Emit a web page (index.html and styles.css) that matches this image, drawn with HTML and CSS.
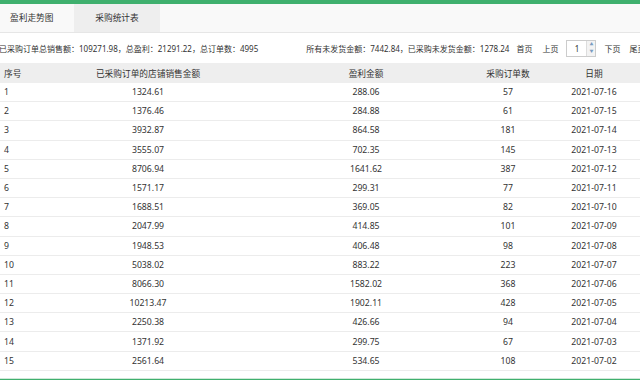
FILE: index.html
```html
<!DOCTYPE html>
<html>
<head>
    <meta charset="UTF-8">
    <title>采购统计表</title>
    <link rel="stylesheet" href="styles.css">
</head>
<body>
    <div class="top-bar"></div>
    <div class="tabs">
        <div class="tab first">盈利走势图</div>
        <div class="tab active">采购统计表</div>
    </div>

    <div class="summary">
        <span class="totals">已采购订单总销售额：109271.98，总盈利：21291.22，总订单数：4995</span>
        <div class="pager">
            <span class="unsent">所有未发货金额：7442.84，已采购未发货金额：1278.24</span>
            <a>首页</a>
            <a class="prev">上页</a>
            <span class="page-input">
                <span class="page-num">1</span>
                <span class="spin">
                    <span class="spin-btn">▲</span>
                    <span class="spin-btn">▼</span>
                </span>
            </span>
            <a>下页</a>
            <a class="last">尾页</a>
        </div>
    </div>

    <table class="data-table">
        <colgroup>
            <col style="width: 32px">
            <col style="width: 232px">
            <col style="width: 204px">
            <col style="width: 80px">
            <col style="width: 92px">
        </colgroup>
        <thead>
            <tr>
                <th class="left">序号</th>
                <th>已采购订单的店铺销售金额</th>
                <th>盈利金额</th>
                <th>采购订单数</th>
                <th>日期</th>
            </tr>
        </thead>
        <tbody id="rows"></tbody>
    </table>
    <div class="bottom-bar"></div>

    <script>
        const data = [
            ['1324.61', '288.06', 57, '2021-07-16'],
            ['1376.46', '284.88', 61, '2021-07-15'],
            ['3932.87', '864.58', 181, '2021-07-14'],
            ['3555.07', '702.35', 145, '2021-07-13'],
            ['8706.94', '1641.62', 387, '2021-07-12'],
            ['1571.17', '299.31', 77, '2021-07-11'],
            ['1688.51', '369.05', 82, '2021-07-10'],
            ['2047.99', '414.85', 101, '2021-07-09'],
            ['1948.53', '406.48', 98, '2021-07-08'],
            ['5038.02', '883.22', 223, '2021-07-07'],
            ['8066.30', '1582.02', 368, '2021-07-06'],
            ['10213.47', '1902.11', 428, '2021-07-05'],
            ['2250.38', '426.66', 94, '2021-07-04'],
            ['1371.92', '299.75', 67, '2021-07-03'],
            ['2561.64', '534.65', 108, '2021-07-02']
        ];
        const tbody = document.getElementById('rows');
        data.forEach((row, i) => {
            const tr = document.createElement('tr');
            tr.innerHTML = `<td class="left">${i + 1}</td>` +
                row.map(v => `<td>${v}</td>`).join('');
            tbody.appendChild(tr);
        });
    </script>
</body>
</html>
```

FILE: styles.css
```css
body {
    margin: 0;
    width: 640px;
    overflow: hidden;
    font-family: "Noto Sans", "Noto Sans CJK SC", sans-serif;
    font-size: 8.7px;
    color: #333;
    background: #fff;
}
.top-bar {
    height: 4px;
    background: #3fb06e;
}
.tabs {
    display: flex;
    height: 28px;
    background: #f9f9f9;
    border-bottom: 1px solid #e6e6e6;
}
.tab {
    width: 86px;
    line-height: 28px;
    text-align: center;
    color: #333;
}
.tab.first {
    width: 64px;
    padding-left: 10px;
    text-align: left;
}
.tab.active {
    background: #eeeeee;
}
.summary {
    display: flex;
    align-items: center;
    height: 30px;
    margin-left: -1px;
    white-space: nowrap;
    font-size: 8px;
}
.pager {
    display: flex;
    align-items: center;
    gap: 8px;
    margin-left: 48px;
}
.pager .unsent {
    margin-right: -1px;
}
.pager .prev {
    margin-left: 2px;
}
.pager .last {
    margin-left: 1px;
}
.page-input {
    display: flex;
    width: 30px;
    height: 17px;
    border: 1px solid #ccc;
    box-sizing: border-box;
    background: #fff;
}
.page-num {
    flex: 1;
    text-align: center;
    line-height: 15px;
}
.spin {
    display: flex;
    flex-direction: column;
    width: 8px;
    border-left: 1px solid #ddd;
    background: #f3f3f3;
}
.spin-btn {
    flex: 1;
    font-size: 4px;
    line-height: 7px;
    text-align: center;
    color: #7a9cc0;
}
.data-table {
    width: 640px;
    border-collapse: collapse;
    table-layout: fixed;
}
.data-table th {
    height: 20px;
    padding: 0;
    background: #eeeeee;
    font-weight: normal;
    text-align: center;
}
.data-table td {
    height: 18.2px;
    text-align: center;
    border-bottom: 1px solid #ececec;
    padding: 0;
}
.data-table .left {
    text-align: left;
    padding-left: 4px;
}
.bottom-bar {
    margin-top: 7px;
    height: 3px;
    border-top: 1px solid #cfe8d8;
    background: #3fb06e;
}
```
